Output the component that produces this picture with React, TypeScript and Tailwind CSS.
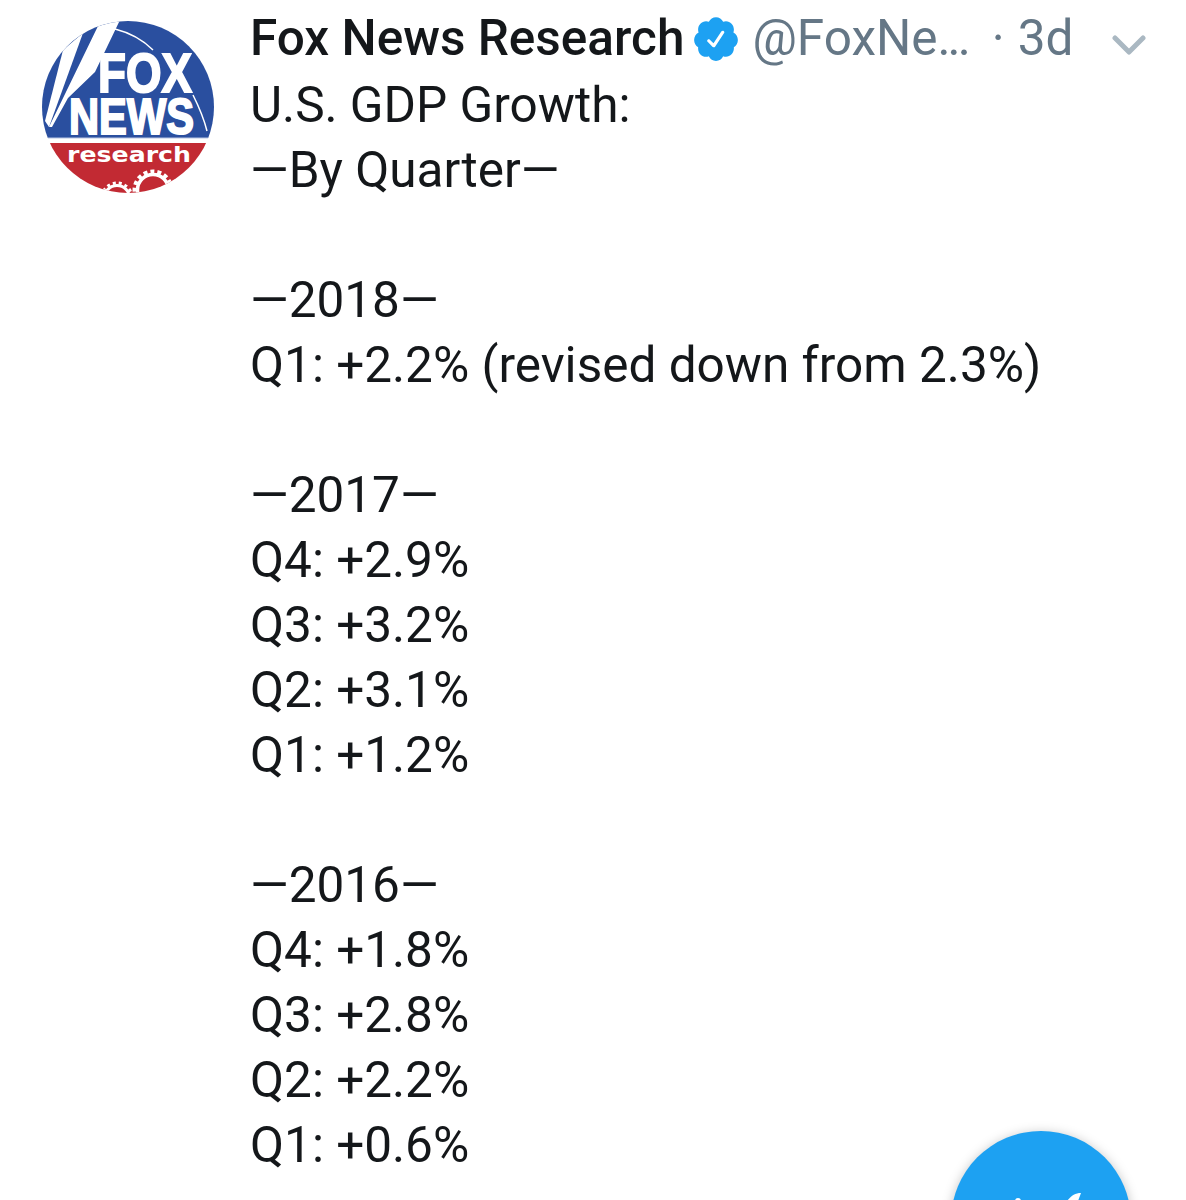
const lines = [
  'U.S. GDP Growth:',
  '—By Quarter—',
  '',
  '—2018—',
  'Q1: +2.2% (revised down from 2.3%)',
  '',
  '—2017—',
  'Q4: +2.9%',
  'Q3: +3.2%',
  'Q2: +3.1%',
  'Q1: +1.2%',
  '',
  '—2016—',
  'Q4: +1.8%',
  'Q3: +2.8%',
  'Q2: +2.2%',
  'Q1: +0.6%',
];

function FoxLogo() {
  return (
    <svg width="172" height="172" viewBox="0 0 172 172">
      <defs>
        <clipPath id="disc">
          <circle cx="86" cy="86" r="86" />
        </clipPath>
      </defs>
      <g clipPath="url(#disc)">
        <rect x="0" y="0" width="172" height="117" fill="#2a4f9f" />
        <rect x="0" y="122" width="172" height="50" fill="#c22a33" />
        <polygon points="21,29 41,12 7,106 3,100" fill="#fff" />
        <polygon points="56,5 78,-1 53,51 26,77 10,106 7,106" fill="#fff" />
        <path d="M73 8 C89 12 102 20 111 29" stroke="#fff" strokeWidth="1.5" fill="none" />
        <path d="M151 74 C157 86 162 98 165 110" stroke="#fff" strokeWidth="1.5" fill="none" />
        <path d="M0 117 H172" stroke="#b9c6e2" strokeWidth="1" />
        <text x="56" y="71" textLength="94" lengthAdjust="spacingAndGlyphs" fontFamily="'Liberation Sans', sans-serif" fontWeight="700" fontSize="55" fill="#fff" stroke="#fff" strokeWidth="2">FOX</text>
        <text x="27" y="113" textLength="125" lengthAdjust="spacingAndGlyphs" fontFamily="'Liberation Sans', sans-serif" fontWeight="700" fontSize="50" fill="#fff" stroke="#fff" strokeWidth="2">NEWS</text>
        <text x="25" y="141" textLength="124" lengthAdjust="spacingAndGlyphs" fontFamily="'DejaVu Sans', sans-serif" fontWeight="700" fontSize="21" fill="#fff">research</text>
        <circle cx="111" cy="169" r="15.5" fill="none" stroke="#fff" strokeWidth="3.5" />
        <circle cx="111" cy="169" r="18.5" fill="none" stroke="#fff" strokeWidth="4" strokeDasharray="4 3" />
        <circle cx="75" cy="177" r="12.5" fill="none" stroke="#fff" strokeWidth="3" />
        <circle cx="75" cy="177" r="15" fill="none" stroke="#fff" strokeWidth="3" strokeDasharray="3 3" />
      </g>
    </svg>
  );
}

function Verified() {
  return (
    <svg width="50" height="50" viewBox="0 0 24 24" fill="#1da1f2" className="shrink-0">
      <path d="M22.5 12.5c0-1.58-.875-2.95-2.148-3.6.154-.435.238-.905.238-1.4 0-2.21-1.71-3.998-3.818-3.998-.47 0-.92.084-1.336.25C14.818 2.415 13.51 1.5 12 1.5s-2.816.917-3.437 2.25c-.415-.165-.866-.25-1.336-.25-2.11 0-3.818 1.79-3.818 4 0 .494.083.964.237 1.4-1.272.65-2.147 2.018-2.147 3.6 0 1.495.782 2.798 1.942 3.486-.02.17-.032.34-.032.514 0 2.21 1.708 4 3.818 4 .47 0 .92-.086 1.335-.25.62 1.334 1.926 2.25 3.437 2.25 1.512 0 2.818-.916 3.437-2.25.415.163.865.248 1.336.248 2.11 0 3.818-1.79 3.818-4 0-.174-.012-.344-.033-.513 1.158-.687 1.943-1.99 1.943-3.484zm-6.616-3.334l-4.334 6.5c-.145.217-.382.334-.625.334-.143 0-.288-.04-.416-.126l-.115-.094-2.415-2.415c-.293-.293-.293-.768 0-1.06s.768-.294 1.06 0l1.77 1.767 3.825-5.74c.23-.345.696-.436 1.04-.207.346.23.44.696.21 1.04z" />
    </svg>
  );
}

export default function App() {
  return (
    <div className="relative h-[1200px] overflow-hidden bg-white text-[#14171a] font-['Roboto',sans-serif]">
      <div className="flex">
        <div className="w-[250px] shrink-0 pl-[42px] pt-[21px]">
          <FoxLogo />
        </div>
        <div className="flex-1 pt-[6px] text-[49.5px] leading-[65px]">
          <div className="flex items-center mb-[2px]">
            <span className="font-medium whitespace-nowrap">Fox News Research</span>
            <span className="ml-[7px]">
              <Verified />
            </span>
            <span className="ml-[11px] text-[#657786] whitespace-nowrap">
              @FoxNe<span className="tracking-[-3px]">...</span>
            </span>
            <span className="ml-[24px] text-[#657786]">·</span>
            <span className="ml-[13px] text-[#657786]">3d</span>
            <svg width="34" height="22" viewBox="0 0 34 22" className="ml-[39px] mt-[12px]">
              <path d="M3 4 L17 18 L31 4" fill="none" stroke="#aab8c2" strokeWidth="5" strokeLinecap="round" strokeLinejoin="round" />
            </svg>
          </div>
          {lines.map((line, i) => (
            <div key={i} className="h-[65px] whitespace-nowrap">
              {line}
            </div>
          ))}
        </div>
      </div>
      {/* compose button, cut off by the bottom edge */}
      <div className="absolute left-[951px] top-[1131px] w-[180px] h-[180px] rounded-full bg-[#1da1f2] shadow-[0_2px_12px_rgba(0,0,0,0.25)]">
        <svg width="180" height="180" viewBox="0 0 180 180">
          <circle cx="67" cy="70" r="3" fill="#fff" />
          <path d="M116 70 C120 65 124 62 130 62 L127 70 Z" fill="#fff" />
        </svg>
      </div>
    </div>
  );
}
